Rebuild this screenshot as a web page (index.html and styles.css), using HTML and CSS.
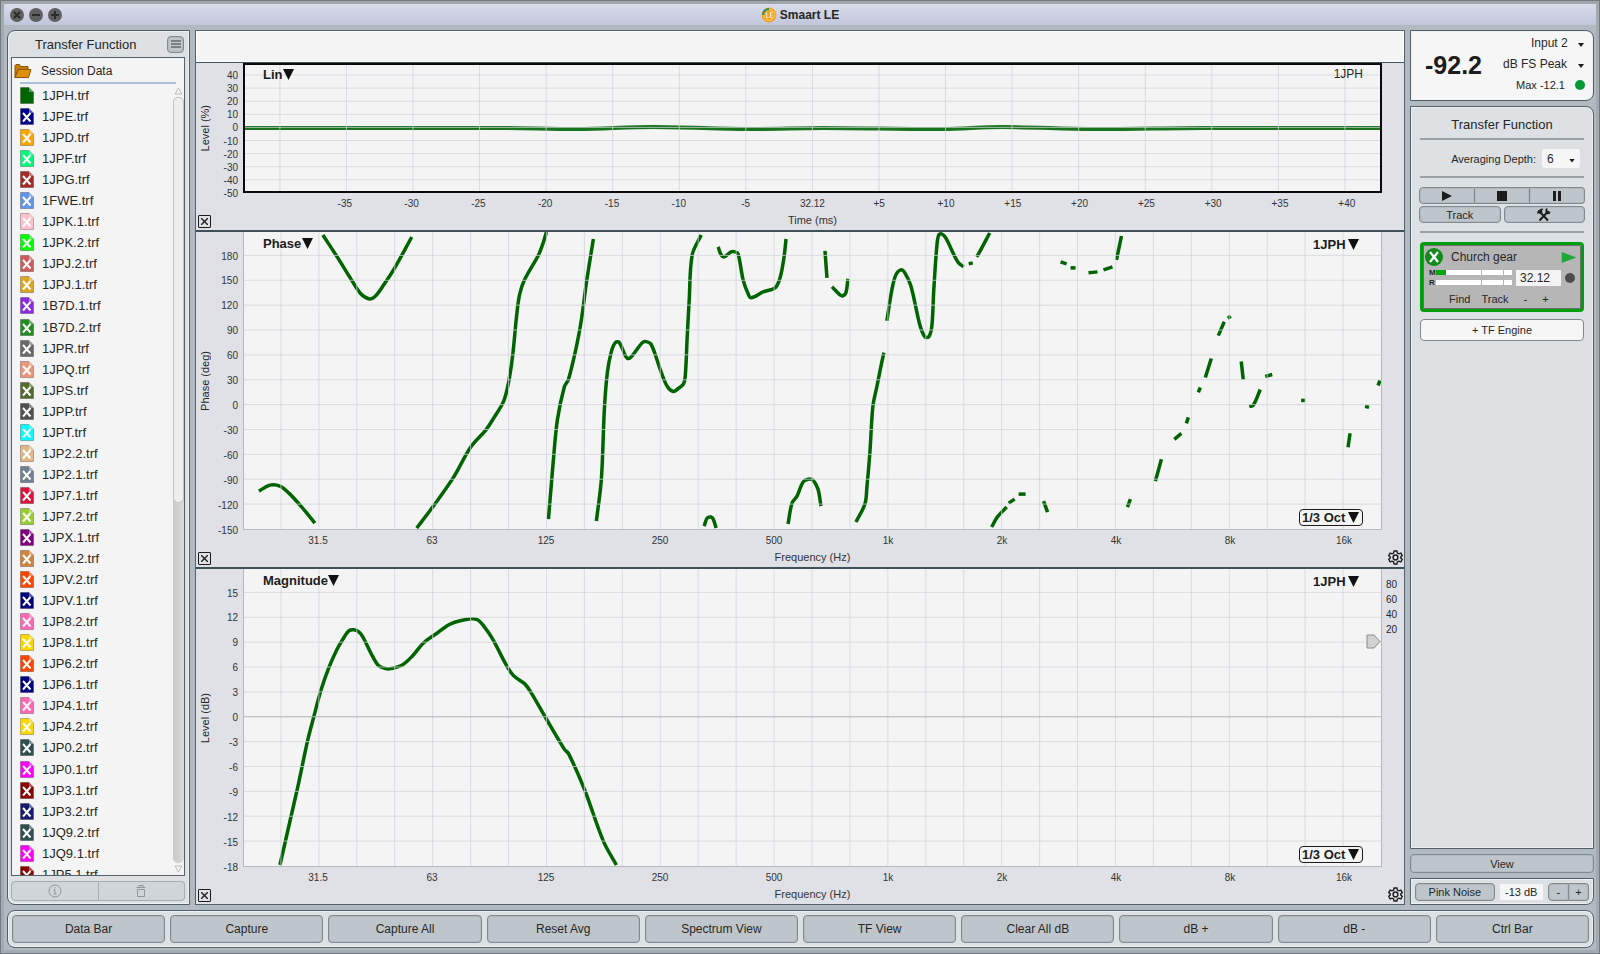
FILE: index.html
```html
<!DOCTYPE html>
<html lang="en">

<head>
    <meta charset="UTF-8">
    <meta name="viewport" content="width=device-width, initial-scale=1.0">
    <title>Smaart LE</title>
    <link rel="stylesheet" href="styles.css">
</head>

<body>
    <header class="titlebar">
        <div class="window-buttons">
            <button aria-label="Close"><svg viewBox="0 0 14 14"><path d="M4 4l6 6M10 4l-6 6" /></svg></button>
            <button aria-label="Minimize"><svg viewBox="0 0 14 14"><path d="M3 7h8" /></svg></button>
            <button aria-label="Zoom"><svg viewBox="0 0 14 14"><path d="M3 7h8M7 3v8" /></svg></button>
        </div>
        <h1>
            <svg class="logo" viewBox="0 0 16 16">
                <circle cx="8" cy="8" r="7.5" fill="#f0a623" />
                <circle cx="8" cy="8" r="5.5" fill="none" stroke="#f7c566" />
                <path d="M2 8a6 6 0 0 1 6-6" fill="none" stroke="#2c8a66" stroke-width="2" />
                <path d="M5.500 5.500v5h2M11.500 5.500h-2v5h2M9.500 8h2" fill="none" stroke="#fdeccb" />
            </svg>
            Smaart LE
        </h1>
    </header>

    <main>
        <!-- Data bar -->
        <aside class="panel data-bar">
            <div class="data-head">
                <h2>Transfer Function</h2>
                <button class="btn menu-button" aria-label="Menu"><svg viewBox="0 0 10 8"><path d="M0 1h10M0 4h10M0 7h10" /></svg></button>
            </div>
            <div class="data-box">
                <div class="session">
                    <svg viewBox="0 0 18 16">
                        <path d="M1 14.500V2.500l1-1h3.500l1 2H14v3H4.500z" fill="#c67b08" stroke="#8a5606" />
                        <path d="M1 14.500l3.500-8H17l-2.500 8z" fill="#e08e0b" stroke="#8a5606" />
                    </svg>
                    <span>Session Data</span>
                </div>
                <div class="file-area">
                    <ul id="file-list"></ul>
                    <div class="scrollbar">
                        <svg viewBox="0 0 9 8"><path d="M4.500 1L8 7H1z" /></svg>
                        <div class="track"><div class="thumb"></div></div>
                        <svg viewBox="0 0 9 8"><path d="M4.500 7L8 1H1z" /></svg>
                    </div>
                </div>
            </div>
            <div class="joined data-actions">
                <button class="btn" aria-label="Info"><svg viewBox="0 0 14 14"><circle cx="7" cy="7" r="6" /><path d="M5.500 6H7v4M5.500 10h3M7 3.300v1.200" /></svg></button>
                <button class="btn" aria-label="Delete"><svg viewBox="0 0 14 14"><path d="M2.500 3.500h9M5 3V1.500h4V3M3.500 5.500v7h7v-7z" /></svg></button>
            </div>
        </aside>

        <!-- Plots -->
        <section class="plots">
            <div class="readout"></div>

            <article class="chart live" data-chart="live">
                <div class="y-axis"><span>Level (%)</span><svg class="y-ticks"></svg></div>
                <div class="plot">
                    <svg class="graph"></svg>
                    <label class="pick top-left"><select aria-label="Impulse view"><option>Lin</option></select></label>
                    <span class="trace-name">1JPH</span>
                </div>
                <div class="y-right"></div>
                <div class="corner"><button class="close-box" aria-label="Close plot"><svg viewBox="0 0 7 7"><path d="M0 0l7 7M7 0L0 7" /></svg></button></div>
                <svg class="x-axis"></svg>
                <div class="corner"></div>
            </article>

            <article class="chart" data-chart="phase">
                <div class="y-axis"><span>Phase (deg)</span><svg class="y-ticks"></svg></div>
                <div class="plot">
                    <svg class="graph"></svg>
                    <label class="pick top-left"><select aria-label="Plot type"><option>Phase</option></select></label>
                    <label class="pick top-right"><select aria-label="Trace"><option>1JPH</option></select></label>
                    <label class="pick smoothing"><select aria-label="Smoothing"><option>1/3 Oct</option></select></label>
                </div>
                <div class="y-right"></div>
                <div class="corner"><button class="close-box" aria-label="Close plot"><svg viewBox="0 0 7 7"><path d="M0 0l7 7M7 0L0 7" /></svg></button></div>
                <svg class="x-axis"></svg>
                <div class="corner"><button class="gear" aria-label="Plot settings"><svg viewBox="0 0 16 16"><path d="M6.500 1h3l.5 2.200 1.600.9 2.100-.8 1.500 2.600L13.600 7.400v1.200l1.600 1.500-1.500 2.600-2.100-.8-1.600.9-.5 2.200h-3L6 12.800l-1.600-.9-2.100.8-1.500-2.600 1.600-1.500V7.400L.8 5.900l1.500-2.600 2.100.8L6 3.200z" /><circle cx="8" cy="8" r="2.600" /></svg></button></div>
            </article>

            <article class="chart" data-chart="magnitude">
                <div class="y-axis"><span>Level (dB)</span><svg class="y-ticks"></svg></div>
                <div class="plot">
                    <svg class="graph"></svg>
                    <label class="pick top-left"><select aria-label="Plot type"><option>Magnitude</option></select></label>
                    <label class="pick top-right"><select aria-label="Trace"><option>1JPH</option></select></label>
                    <label class="pick smoothing"><select aria-label="Smoothing"><option>1/3 Oct</option></select></label>
                    <svg class="threshold" viewBox="0 0 15 15"><path d="M1 1h7l6 6.500-6 6.500H1z" /></svg>
                </div>
                <div class="y-right"><span>80</span><span>60</span><span>40</span><span>20</span></div>
                <div class="corner"><button class="close-box" aria-label="Close plot"><svg viewBox="0 0 7 7"><path d="M0 0l7 7M7 0L0 7" /></svg></button></div>
                <svg class="x-axis"></svg>
                <div class="corner"><button class="gear" aria-label="Plot settings"><svg viewBox="0 0 16 16"><path d="M6.500 1h3l.5 2.200 1.600.9 2.100-.8 1.500 2.600L13.600 7.400v1.200l1.600 1.500-1.500 2.600-2.100-.8-1.600.9-.5 2.200h-3L6 12.800l-1.600-.9-2.100.8-1.500-2.600 1.600-1.500V7.400L.8 5.900l1.500-2.600 2.100.8L6 3.200z" /><circle cx="8" cy="8" r="2.600" /></svg></button></div>
            </article>
        </section>

        <!-- Control bar -->
        <aside class="control-bar">
            <section class="panel meter">
                <strong>-92.2</strong>
                <div class="meter-info">
                    <label class="mini"><select aria-label="Input"><option>Input 2</option></select></label>
                    <label class="mini"><select aria-label="Meter type"><option>dB FS Peak</option></select></label>
                    <div class="max">Max -12.1 <i></i></div>
                </div>
            </section>

            <section class="panel transfer">
                <h2>Transfer Function</h2>
                <hr>
                <div class="averaging">
                    <label for="depth">Averaging Depth:</label>
                    <span class="mini depth"><select id="depth"><option>6</option></select></span>
                </div>
                <hr>
                <div class="transport">
                    <div class="joined">
                        <button class="btn" aria-label="Play"><svg viewBox="0 0 10 10"><path d="M0 0l10 5-10 5z" /></svg></button>
                        <button class="btn" aria-label="Stop"><svg viewBox="0 0 10 10"><path d="M0 0h10v10H0z" /></svg></button>
                        <button class="btn" aria-label="Pause"><svg viewBox="0 0 10 10"><path d="M1 0h3v10H1zM6 0h3v10H6z" /></svg></button>
                    </div>
                    <div class="pair">
                        <button class="btn">Track</button>
                        <button class="btn" aria-label="Tools">
                            <svg class="tools" viewBox="0 0 14 14">
                                <path d="M2.500 3.500l8.500 9M11.500 3L2.500 12.500" fill="none" stroke="#1c1c1c" stroke-width="2" />
                                <path d="M0 5l1-2.500L4.500.5l2 .5L5 2.500l.5 1.500L3 6l-1-1L1 6zM8.500 1l2-1-.5 2.500L11.500 4l2-.5-.5 2-2 1-2.500-2z" />
                            </svg>
                        </button>
                    </div>
                </div>
                <hr>
                <div class="engine">
                    <div class="engine-head">
                        <svg class="badge" viewBox="0 0 18 18"><circle cx="9" cy="9" r="9" fill="#128a1b" /><path d="M5 4l8 10M13 4L5 14" stroke="#fff" stroke-width="2.200" fill="none" /></svg>
                        <span>Church gear</span>
                        <button aria-label="Run engine"><svg viewBox="0 0 16 12"><path d="M0 0l16 6-16 6z" fill="#1fa83a" /></svg></button>
                    </div>
                    <div class="engine-levels">
                        <div class="levels">
                            <b>M</b><div class="bar"><i style="width: 13%"></i></div>
                            <b>R</b><div class="bar"></div>
                        </div>
                        <input type="text" value="32.12" aria-label="Delay">
                        <span class="dot"></span>
                    </div>
                    <div class="engine-actions">
                        <button>Find</button><button>Track</button><button>-</button><button>+</button>
                    </div>
                </div>
                <button class="btn add-engine">+ TF Engine</button>
            </section>

            <button class="btn view">View</button>

            <section class="panel generator">
                <button class="btn">Pink Noise</button>
                <input type="text" value="-13 dB" aria-label="Generator level">
                <div class="joined"><button class="btn">-</button><button class="btn">+</button></div>
            </section>
        </aside>
    </main>

    <footer class="panel toolbar">
        <button class="btn">Data Bar</button>
        <button class="btn">Capture</button>
        <button class="btn">Capture All</button>
        <button class="btn">Reset Avg</button>
        <button class="btn">Spectrum View</button>
        <button class="btn">TF View</button>
        <button class="btn">Clear All dB</button>
        <button class="btn">dB +</button>
        <button class="btn">dB -</button>
        <button class="btn">Ctrl Bar</button>
    </footer>

    <script src="script.js"></script>
</body>

</html>
```
FILE: styles.css
```css
* {
    box-sizing: border-box;
}

body {
    display: flex;
    flex-direction: column;
    height: 100vh;
    margin: 0;
    padding-bottom: 2px;
    overflow: hidden;
    border: 4px solid #a3abb0;
    border-top-color: #a0a5ab;
    outline: 1px solid #747b80;
    outline-offset: -1px;
    background: #b1bac0;
    color: #262626;
    font: 12px "Liberation Sans", Arial, sans-serif;
}

button,
input,
select {
    margin: 0;
    padding: 0;
    border: none;
    background: none;
    color: inherit;
    font: inherit;
}

select {
    appearance: none;
    cursor: pointer;
}

h1,
h2 {
    margin: 0;
    font-size: 13px;
    font-weight: normal;
}

/* Title bar */
.titlebar {
    display: grid;
    grid-template-columns: 1fr auto 1fr;
    align-items: center;
    height: 21px;
    padding: 0 6px;
    background: linear-gradient(#dadcea, #c2c6dc);
}

.window-buttons {
    display: flex;
    gap: 5px;
}

.window-buttons button {
    width: 14px;
    height: 14px;
    border-radius: 50%;
    background: #5f5f61;
}

.window-buttons svg {
    display: block;
    stroke: #2b2b2d;
    stroke-width: 2;
}

h1 {
    display: flex;
    align-items: center;
    gap: 3px;
    font-size: 12px;
    font-weight: bold;
}

.logo {
    width: 16px;
    height: 16px;
}

/* Shared pieces */
.panel {
    border: 1px solid #526068;
    background: #dde1e4;
    box-shadow: inset 0 0 0 1px #eef0f2;
}

.btn {
    border: 1px solid #808a90;
    border-radius: 4px;
    background: #bfc6cb;
    box-shadow: inset 0 0 0 1px #b3bbc0;
}

.joined {
    display: flex;
}

.joined .btn {
    flex: 1;
    border-radius: 0;
}

.joined .btn + .btn {
    border-left: none;
}

.joined .btn:first-child {
    border-radius: 4px 0 0 4px;
}

.joined .btn:last-child {
    border-radius: 0 4px 4px 0;
}

main {
    display: grid;
    grid-template-columns: 183px 1fr 184px;
    gap: 5px;
    flex: 1;
    min-height: 0;
    padding: 5px 2px 5px 3px;
}

/* Data bar */
.data-bar {
    display: flex;
    flex-direction: column;
    min-height: 0;
    padding: 0 4px 3px 3px;
    border-radius: 8px 0 0 8px;
}

.data-head {
    display: flex;
    align-items: center;
    justify-content: flex-end;
    height: 26px;
    padding-right: 1px;
}

.data-head h2 {
    flex: 1;
    padding-left: 24px;
}

.menu-button {
    display: grid;
    place-items: center;
    width: 17px;
    height: 17px;
}

.menu-button svg {
    width: 10px;
    height: 8px;
    stroke: #3c3c3c;
}

.data-box {
    display: flex;
    flex-direction: column;
    flex: 1;
    min-height: 0;
    border: 1px solid #56626a;
    background: #f4f4f4;
}

.session {
    display: flex;
    align-items: center;
    gap: 9px;
    height: 26px;
    padding-left: 2px;
    background: linear-gradient(#aabede, #aabede) 8px 100% / calc(100% - 16px) 2px no-repeat;
}

.session svg {
    width: 18px;
    height: 16px;
}

.file-area {
    display: flex;
    flex: 1;
    min-height: 0;
    overflow: hidden;
}

#file-list {
    display: flex;
    flex-direction: column;
    flex: 1;
    height: calc(100% + 10px);
    margin: 0;
    padding: 1px 0 0 8px;
    list-style: none;
    font-size: 13px;
}

#file-list li {
    display: flex;
    align-items: center;
    flex: 1;
    gap: 8px;
}

#file-list svg {
    width: 14px;
    height: 17px;
}

.scrollbar {
    display: flex;
    flex-direction: column;
    align-items: center;
    gap: 2px;
    width: 11px;
    padding: 3px 0 2px;
}

.scrollbar svg {
    width: 9px;
    height: 8px;
    fill: none;
    stroke: #bbb;
}

.track {
    flex: 1;
    width: 11px;
    border-radius: 5px;
    background: linear-gradient(90deg, #c9c9c9, #dadada);
}

.thumb {
    height: 53%;
    border: 1px solid #c4c4c4;
    border-radius: 5px;
    background: #eeeeef;
}

.data-actions {
    height: 20px;
    margin-top: 5px;
}

.data-actions .btn {
    border-color: #a4adb2;
    background: #cfd5d8;
    box-shadow: none;
}

.data-actions svg {
    display: block;
    width: 14px;
    height: 14px;
    margin: auto;
    fill: none;
    stroke: #8f979c;
}

/* Plots */
.plots {
    display: flex;
    flex-direction: column;
    min-width: 0;
    border: 1px solid #56626a;
    background: #dfe1e6;
}

.readout {
    height: 31px;
    border: 1px solid #fff;
    background: #f4f4f4;
}

.chart {
    display: grid;
    grid-template-columns: 47px 1fr 22px;
    grid-template-rows: minmax(0, 1fr) 37px;
    flex: 337 1 0;
    min-height: 0;
    border-top: 2px solid #414f57;
}

.chart.live {
    flex-grow: 168;
    border-top-width: 1px;
}

.y-axis {
    display: flex;
    align-items: center;
    padding-right: 5px;
    font-size: 11px;
}

.live .y-axis {
    padding-top: 2px;
    padding-bottom: 2px;
}

.y-axis span {
    width: 19px;
    line-height: 19px;
    writing-mode: vertical-rl;
    transform: rotate(180deg);
}

.y-ticks {
    flex: 1;
    width: 0;
    height: 100%;
    overflow: visible;
    font-size: 10px;
    text-anchor: end;
}

.plot {
    position: relative;
    min-width: 0;
    border: 1px solid #b4b8bf;
    border-width: 0 1px 1px;
    background: #f4f4f4;
}

.live .plot {
    border: 2px solid #0a0a0a;
}

.graph {
    position: absolute;
    width: 100%;
    height: 100%;
}

.graph path {
    vector-effect: non-scaling-stroke;
    fill: none;
}

.grid-line {
    stroke: #d0d3db;
    stroke-opacity: 0.75;
}

.zero-line {
    stroke: #b0b3b8;
}

.trace {
    stroke: #006400;
    stroke-width: 3.5;
    stroke-linejoin: round;
}

.live .trace {
    stroke: #1a741e;
    stroke-width: 4;
}

.pick {
    display: flex;
    align-items: center;
    position: absolute;
    color: #1c1c1c;
    font-size: 13px;
    font-weight: bold;
    line-height: 15px;
}

.pick::after {
    content: "";
    width: 11px;
    height: 11px;
    background: #111;
    clip-path: polygon(0 0, 100% 0, 50% 100%);
}

.top-left {
    top: 4px;
    left: 19px;
}

.live .top-left {
    top: 2px;
    left: 18px;
}

.top-right {
    top: 5px;
    right: 22px;
    gap: 2px;
}

.smoothing {
    right: 18px;
    bottom: 3px;
    gap: 2px;
    padding: 0 3px 0 2px;
    border: 1px solid #1c1c1c;
    border-radius: 4px;
    background: #f4f4f4;
}

.trace-name {
    position: absolute;
    top: 2px;
    right: 17px;
    font-size: 12px;
}

.threshold {
    position: absolute;
    top: 65px;
    right: 0;
    width: 15px;
    height: 15px;
    fill: #d2d2d2;
    stroke: #8c8c8c;
}

.y-right {
    display: flex;
    flex-direction: column;
    padding: 8px 0 0 4px;
    font-size: 10px;
    line-height: 15px;
}

.x-axis {
    width: 100%;
    height: 37px;
    overflow: visible;
    font-size: 10px;
    text-anchor: middle;
}

.x-axis .axis-title {
    font-size: 11px;
}

.y-ticks text,
.x-axis text {
    fill: #333;
}

.corner {
    display: flex;
    align-items: flex-end;
    padding: 0 2px 2px;
}

.close-box {
    display: grid;
    place-items: center;
    width: 13px;
    height: 13px;
    border: 1px solid #1c1c1c;
    border-radius: 1px;
}

.close-box svg {
    width: 7px;
    height: 7px;
    stroke: #222;
    stroke-width: 1.4;
}

.gear {
    margin-left: 4px;
}

.gear svg {
    display: block;
    width: 15px;
    height: 15px;
    overflow: visible;
    fill: none;
    stroke: #1c1c1c;
    stroke-width: 1.5;
}

/* Control bar */
.control-bar {
    display: flex;
    flex-direction: column;
    gap: 5px;
    min-height: 0;
}

.control-bar .panel {
    border-radius: 0 8px 0 0;
}

.control-bar .meter {
    display: flex;
    align-items: center;
    justify-content: space-between;
    height: 71px;
    padding: 0 8px 0 14px;
    border-radius: 0 8px 8px 0;
    background: #f6f6f6;
}

.meter strong {
    color: #1c1c1c;
    font-size: 25px;
}

.meter-info {
    display: flex;
    flex-direction: column;
    align-items: flex-end;
    padding-bottom: 3px;
}

.mini {
    display: flex;
    align-items: center;
    gap: 10px;
    height: 21px;
    padding-right: 1px;
}

.mini::after {
    content: "";
    width: 6px;
    height: 4px;
    margin-top: 4px;
    background: #1c1c1c;
    clip-path: polygon(0 0, 100% 0, 50% 100%);
}

.max {
    display: flex;
    align-items: center;
    gap: 10px;
    height: 21px;
    font-size: 11px;
}

.max i {
    width: 10px;
    height: 10px;
    border-radius: 50%;
    background: #009a36;
}

.transfer {
    flex: 1;
    padding: 10px 8px;
    font-size: 11px;
}

.transfer h2 {
    line-height: 15px;
    text-align: center;
}

.transfer hr {
    height: 2px;
    margin: 6px 1px 0;
    border: none;
    background: #9aa1a6;
}

.averaging {
    display: flex;
    align-items: center;
    justify-content: flex-end;
    gap: 6px;
    padding: 9px 5px 2px;
}

.depth {
    justify-content: space-between;
    width: 38px;
    height: 19px;
    padding: 0 5px;
    border-radius: 3px;
    background: #f6f6f6;
    font-size: 12px;
}

.transport {
    display: flex;
    flex-direction: column;
    gap: 2px;
    padding: 9px 0 2px;
}

.transport .btn {
    display: grid;
    place-items: center;
    height: 17px;
}

.transport svg {
    width: 10px;
    height: 10px;
    fill: #1c1c1c;
}

.transport .tools {
    width: 14px;
    height: 14px;
}

.pair {
    display: grid;
    grid-template-columns: 1fr 1fr;
    gap: 3px;
}

.engine {
    display: flex;
    flex-direction: column;
    margin: 9px 1px 7px;
    padding: 2px 2px 4px;
    border: 3px solid #009d0c;
    border-radius: 4px;
    box-shadow: inset 0 0 0 1px #6c6c6c;
    background: #b6b6b6;
}

.engine-head {
    display: flex;
    align-items: center;
    gap: 8px;
    height: 20px;
    font-size: 12px;
}

.engine-head .badge {
    width: 18px;
    height: 18px;
}

.engine-head button {
    margin-left: auto;
    padding-right: 2px;
}

.engine-head button svg {
    display: block;
    width: 16px;
    height: 11px;
}

.engine-levels {
    display: flex;
    align-items: center;
    gap: 4px;
    height: 21px;
    padding: 0 4px;
}

.levels {
    display: grid;
    grid-template-columns: 7px 1fr;
    gap: 2px 0;
    flex: 1;
    align-items: center;
    font-size: 8px;
    line-height: 8px;
}

.bar {
    height: 5px;
    background: linear-gradient(90deg, transparent 59%, #b6b6b6 59%, #b6b6b6 61%, transparent 61%, transparent 88%, #b6b6b6 88%, #b6b6b6 90%, transparent 90%), #fff;
}

.bar i {
    display: block;
    height: 100%;
    background: #00a810;
}

.engine input {
    width: 45px;
    height: 16px;
    padding: 0 4px;
    background: #f4f4f4;
    font-size: 12px;
}

.dot {
    width: 10px;
    height: 10px;
    border-radius: 50%;
    background: #4c4c4c;
}

.engine-actions {
    display: flex;
    gap: 11px;
    height: 17px;
    padding-left: 24px;
    align-items: flex-end;
}

.engine-actions button:nth-child(n + 3) {
    margin-left: 4px;
}

.add-engine {
    display: block;
    width: calc(100% - 2px);
    height: 22px;
    margin: 0 1px;
    background: #f6f6f6;
    box-shadow: none;
}

.view {
    height: 19px;
    font-size: 11px;
}

.control-bar .generator {
    display: flex;
    align-items: center;
    gap: 5px;
    height: 27px;
    padding: 0 4px;
    border-radius: 0 0 8px 0;
    font-size: 11px;
}

.generator .btn {
    height: 18px;
}

.generator > .btn {
    flex: 79;
}

.generator input {
    width: 43px;
    height: 16px;
    background: #f6f6f6;
    text-align: center;
}

.generator .joined {
    flex: 42;
}

/* Bottom toolbar */
.toolbar {
    display: flex;
    gap: 5px;
    height: 38px;
    margin: 0 2px 0 3px;
    padding: 4px;
    border-radius: 8px;
}

.toolbar .btn {
    flex: 1 1 0;
}
```
FILE: script.js
```js
const files = [
    ['1JPH', '#006400'], ['1JPE', '#00008b'], ['1JPD', '#ffa500'], ['1JPF', '#00fa7a'],
    ['1JPG', '#a52a2a'], ['1FWE', '#6495ed'], ['1JPK.1', '#ffc0cb'], ['1JPK.2', '#00ff00'],
    ['1JPJ.2', '#cd5c5c'], ['1JPJ.1', '#daa520'], ['1B7D.1', '#8a2be2'], ['1B7D.2', '#228b22'],
    ['1JPR', '#696969'], ['1JPQ', '#e9967a'], ['1JPS', '#556b2f'], ['1JPP', '#505050'],
    ['1JPT', '#00ffff'], ['1JP2.2', '#deb887'], ['1JP2.1', '#708090'], ['1JP7.1', '#dc143c'],
    ['1JP7.2', '#9acd32'], ['1JPX.1', '#800080'], ['1JPX.2', '#cd853f'], ['1JPV.2', '#ff4500'],
    ['1JPV.1', '#000080'], ['1JP8.2', '#ff69b4'], ['1JP8.1', '#ffd700'], ['1JP6.2', '#ff4500'],
    ['1JP6.1', '#000080'], ['1JP4.1', '#ff69b4'], ['1JP4.2', '#ffd700'], ['1JP0.2', '#2f4f4f'],
    ['1JP0.1', '#ff00ff'], ['1JP3.1', '#8b0000'], ['1JP3.2', '#191970'], ['1JQ9.2', '#2f4f4f'],
    ['1JQ9.1', '#ff00ff'], ['1JP5.1', '#8b0000']
];

document.getElementById('file-list').innerHTML = files.map(([name, color], i) => `
    <li>
        <svg viewBox="0 0 14 17">
            <path d="M.5 .5H9l4.500 4.500v11.500H.5z" fill="${color}" stroke="#000" stroke-opacity=".25"/>
            <path d="M9 .5V5h4.500z" fill="#fff" fill-opacity=".35"/>
            ${i ? '<path d="M3 5l7.500 8.500M10.500 5L3 13.500" stroke="#fff" stroke-width="2"/>' : ''}
        </svg>
        <span>${name}.trf</span>
    </li>`).join('');

// Plot drawings use a 1139 wide box; each segment is a list of x,y points
const W = 1139;
const octaves = ['31.5', '63', '125', '250', '500', '1k', '2k', '4k', '8k', '16k'];

const charts = {
    live: {
        height: 126,
        xGrid: { start: 35, step: 66.8, count: 17 },
        yGrid: { start: 10, step: 13.1, count: 10 },
        yLabels: [40, 30, 20, 10, 0, -10, -20, -30, -40, -50],
        xLabels: ['-35', '-30', '-25', '-20', '-15', '-10', '-5', '32.12', '+5', '+10', '+15', '+20', '+25', '+30', '+35', '+40'],
        xEvery: 1,
        xTitle: 'Time (ms)',
        segments: ['0,63 260,63 335,64 410,62 505,64 580,63 700,64 760,62 850,64 960,63 1139,63']
    },
    phase: {
        height: 298,
        xGrid: { start: 37, step: 38, count: 29 },
        yGrid: { start: 23.5, step: 24.95, count: 12 },
        yLabels: [180, 150, 120, 90, 60, 30, 0, -30, -60, -90, -120, -150],
        xLabels: octaves,
        xEvery: 3,
        xTitle: 'Frequency (Hz)',
        segments: [
            '79,3 94,26 107,47 117,62 125,67 131,65 140,53 151,36 168,5',
            '15,260 26,254 36,255 45,262 57,275 71,292',
            '173,297 189,276 210,246 227,216 242,199 250,187 260,170 265,151 269,125 273,85 276,63 281,48 295,23 300,10 303,0',
            '305,288 310,228 314,188 321,155 325,148 333,115 338,88 343,51 350,7',
            '353,290 358,248 361,178 364,141 368,120 372,111 376,111 382,124 385,127 389,124 399,111 403,110 408,113 417,138 424,155 430,160 435,157 440,153 442,145 444,105 446,68 449,23 458,3',
            '461,295 464,287 468,286 470,288 473,297',
            '475,15 478,23 481,25 488,20 492,20 495,22 500,48 505,62 508,66 520,60 532,56 537,46 541,25 543,7',
            '582,19 584,46',
            '589,55 597,63 600,64 603,61 605,47',
            '545,293 549,272 554,265 560,251 565,248 570,249 575,258 578,275',
            '613,291 622,273 624,256 627,221 630,175 634,155 638,135 641,121',
            '644,89 649,58 653,43 658,38 662,41 668,54 677,93 682,105 686,105 689,95 691,58 694,15 696,3 699,2 703,6 715,30 721,35',
            '726,32 730,31', '734,25 738,18 747,1',
            '818,30 824,32', '828,36 833,36', '846,41 855,40', '861,38 870,35', '874,28 879,4',
            '749,296 754,287 759,281 764,276', '766,272 772,268', '776,263 783,263', '801,270 805,281',
            '885,276 888,268', '913,250 919,228', '932,208 939,202', '944,192 946,186',
            '956,161 958,156', '963,146 969,127', '976,104 982,90', '986,84 988,87',
            '999,130 1001,148', '1007,175 1011,174 1018,158', '1023,145 1030,143',
            '1059,169 1063,169', '1123,175 1127,176', '1106,216 1108,202', '1136,154 1138,149'
        ]
    },
    magnitude: {
        height: 298,
        xGrid: { start: 37, step: 38, count: 29 },
        yGrid: { start: 23.5, step: 24.95, count: 12 },
        yLabels: [15, 12, 9, 6, 3, 0, -3, -6, -9, -12, -15, -18],
        xLabels: octaves,
        xEvery: 3,
        xTitle: 'Frequency (Hz)',
        zero: 5,
        segments: ['36,297 54,218 64,171 70,148 77,122 85,99 93,81 100,69 105,62 110,61 115,63 119,68 129,88 135,97 142,100 147,100 159,96 169,87 180,74 194,64 207,55 227,50 234,51 240,57 249,70 262,95 270,107 281,115 287,123 302,149 321,181 325,185 341,221 360,273 373,297']
    }
};

// Smooth curve through the points: handles follow the neighbours' direction
// and are a third of the segment long
function smoothPath(segment) {
    const p = segment.split(' ').map(s => s.split(',').map(Number));
    const dist = (a, b) => Math.hypot(b[0] - a[0], b[1] - a[1]);
    let d = `M${p[0]}`;
    for (let i = 0; i < p.length - 1; i++) {
        const a = p[i - 1] || p[i], b = p[i], c = p[i + 1], e = p[i + 2] || c;
        const len = dist(b, c) / 3;
        const k1 = len / dist(a, c), k2 = len / dist(b, e);
        const c1 = [b[0] + (c[0] - a[0]) * k1, b[1] + (c[1] - a[1]) * k1];
        const c2 = [c[0] - (e[0] - b[0]) * k2, c[1] - (e[1] - b[1]) * k2];
        d += `C${c1} ${c2} ${c}`;
    }
    return d;
}

document.querySelectorAll('.chart').forEach(el => {
    const c = charts[el.dataset.chart];
    const xs = Array.from({ length: c.xGrid.count }, (_, i) => c.xGrid.start + i * c.xGrid.step);
    const ys = Array.from({ length: c.yGrid.count }, (_, i) => c.yGrid.start + i * c.yGrid.step);

    const graph = el.querySelector('.graph');
    graph.setAttribute('viewBox', `0 0 ${W} ${c.height}`);
    graph.setAttribute('preserveAspectRatio', 'none');
    graph.innerHTML =
        c.segments.map(s => `<path class="trace" d="${smoothPath(s)}"/>`).join('') +
        xs.map(x => `<path class="grid-line" d="M${x} 0V${c.height}"/>`).join('') +
        ys.slice(0, -1).map((y, i) => `<path class="${i === c.zero ? 'zero-line' : 'grid-line'}" d="M0 ${y}H${W}"/>`).join('');

    el.querySelector('.y-ticks').innerHTML = ys.map((y, i) =>
        `<text x="100%" y="${y / c.height * 100}%" dy="4">${c.yLabels[i]}</text>`).join('');

    // labels start at the second grid line
    el.querySelector('.x-axis').innerHTML = c.xLabels.map((label, i) =>
        `<text x="${xs[1 + i * c.xEvery] / W * 100}%" y="14">${label}</text>`
    ).join('') + `<text class="axis-title" x="50%" y="31">${c.xTitle}</text>`;
});
```
